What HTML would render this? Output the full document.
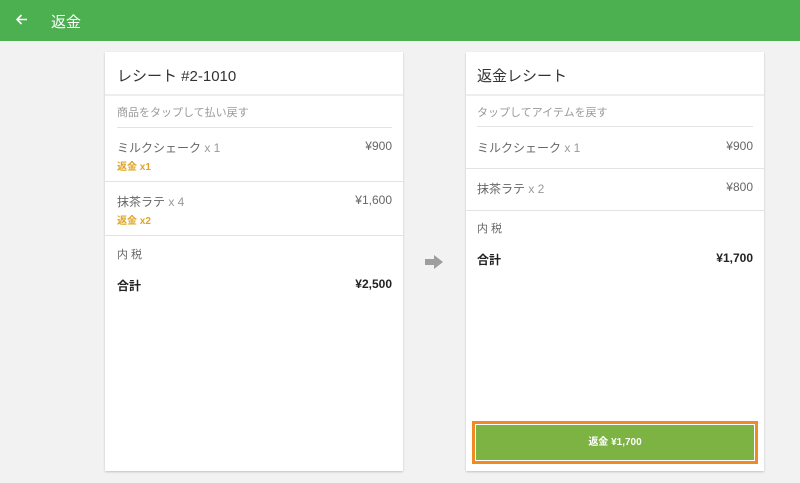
<!DOCTYPE html><html><head><meta charset="utf-8"><style>
*{margin:0;padding:0;box-sizing:border-box}
body{width:800px;height:483px;background:#f2f2f2;font-family:"Liberation Sans","Noto Sans CJK JP",sans-serif;position:relative;overflow:hidden;color:#333}
.hdr{position:absolute;left:0;top:0;width:800px;height:41px;background:#4caf50;color:#fff}
.hdr .t{position:absolute;left:51px;top:11px;font-size:15px}
.card{position:absolute;top:52px;width:298px;height:419px;background:#fff;box-shadow:0 1px 2px rgba(0,0,0,.2)}
.a{position:absolute;font-size:12px;white-space:nowrap}
.r{right:11px}
.ln{position:absolute;height:1px;background:#e3e3e3}
.g{color:#666}.x{color:#999}.o{color:#e0a526;font-size:10px;font-weight:bold}
b{font-weight:bold;color:#222}
</style></head><body>
<div class="hdr"><svg style="position:absolute;left:15px;top:13px" width="13" height="13" viewBox="0 0 13 13"><path d="M12 6.5H2M6.5 2L2 6.5 6.5 11" stroke="#fff" stroke-width="1.6" fill="none"/></svg><div class="t">返金</div></div>

<div class="card" style="left:105px">
<div class="a" style="left:12px;top:13px;font-size:15px;color:#333">レシート #2-1010</div>
<div class="ln" style="left:0;right:0;top:42px;height:2px;background:#eee"></div>
<div class="a x" style="left:12px;top:52px;font-size:11px">商品をタップして払い戻す</div>
<div class="ln" style="left:12px;right:11px;top:75px"></div>
<div class="a g" style="left:12px;top:87px">ミルクシェーク<span class="x"> x 1</span></div>
<div class="a g r" style="top:87px">¥900</div>
<div class="a o" style="left:12px;top:106px">返金 x1</div>
<div class="ln" style="left:0;right:0;top:129px"></div>
<div class="a g" style="left:12px;top:141px">抹茶ラテ<span class="x"> x 4</span></div>
<div class="a g r" style="top:141px">¥1,600</div>
<div class="a o" style="left:12px;top:160px">返金 x2</div>
<div class="ln" style="left:0;right:0;top:183px"></div>
<div class="a g" style="left:12px;top:194px;font-size:11px">内 税</div>
<div class="a" style="left:12px;top:225px"><b>合計</b></div>
<div class="a r" style="top:225px"><b>¥2,500</b></div>
</div>

<svg style="position:absolute;left:425px;top:255px" width="18" height="14" viewBox="0 0 18 14"><path d="M0 4h9V0l9 7-9 7v-4H0z" fill="#9e9e9e"/></svg>

<div class="card" style="left:466px">
<div class="a" style="left:11px;top:13px;font-size:15px;color:#333">返金レシート</div>
<div class="ln" style="left:0;right:0;top:42px;height:2px;background:#eee"></div>
<div class="a x" style="left:11px;top:52px;font-size:11px">タップしてアイテムを戻す</div>
<div class="ln" style="left:11px;right:11px;top:74px"></div>
<div class="a g" style="left:11px;top:87px">ミルクシェーク<span class="x"> x 1</span></div>
<div class="a g r" style="top:87px">¥900</div>
<div class="ln" style="left:0;right:0;top:116px"></div>
<div class="a g" style="left:11px;top:128px">抹茶ラテ<span class="x"> x 2</span></div>
<div class="a g r" style="top:128px">¥800</div>
<div class="ln" style="left:0;right:0;top:158px"></div>
<div class="a g" style="left:11px;top:168px;font-size:11px">内 税</div>
<div class="a" style="left:11px;top:199px"><b>合計</b></div>
<div class="a r" style="top:199px"><b>¥1,700</b></div>
<div style="position:absolute;left:6px;top:369px;width:286px;height:43px;border:3px solid #f08a24;background:#fff;padding:1px"><div style="background:#7cb342;height:100%;color:#fff;font-size:10px;font-weight:bold;text-align:center;line-height:35px">返金 ¥1,700</div></div>
</div>
</body></html>
